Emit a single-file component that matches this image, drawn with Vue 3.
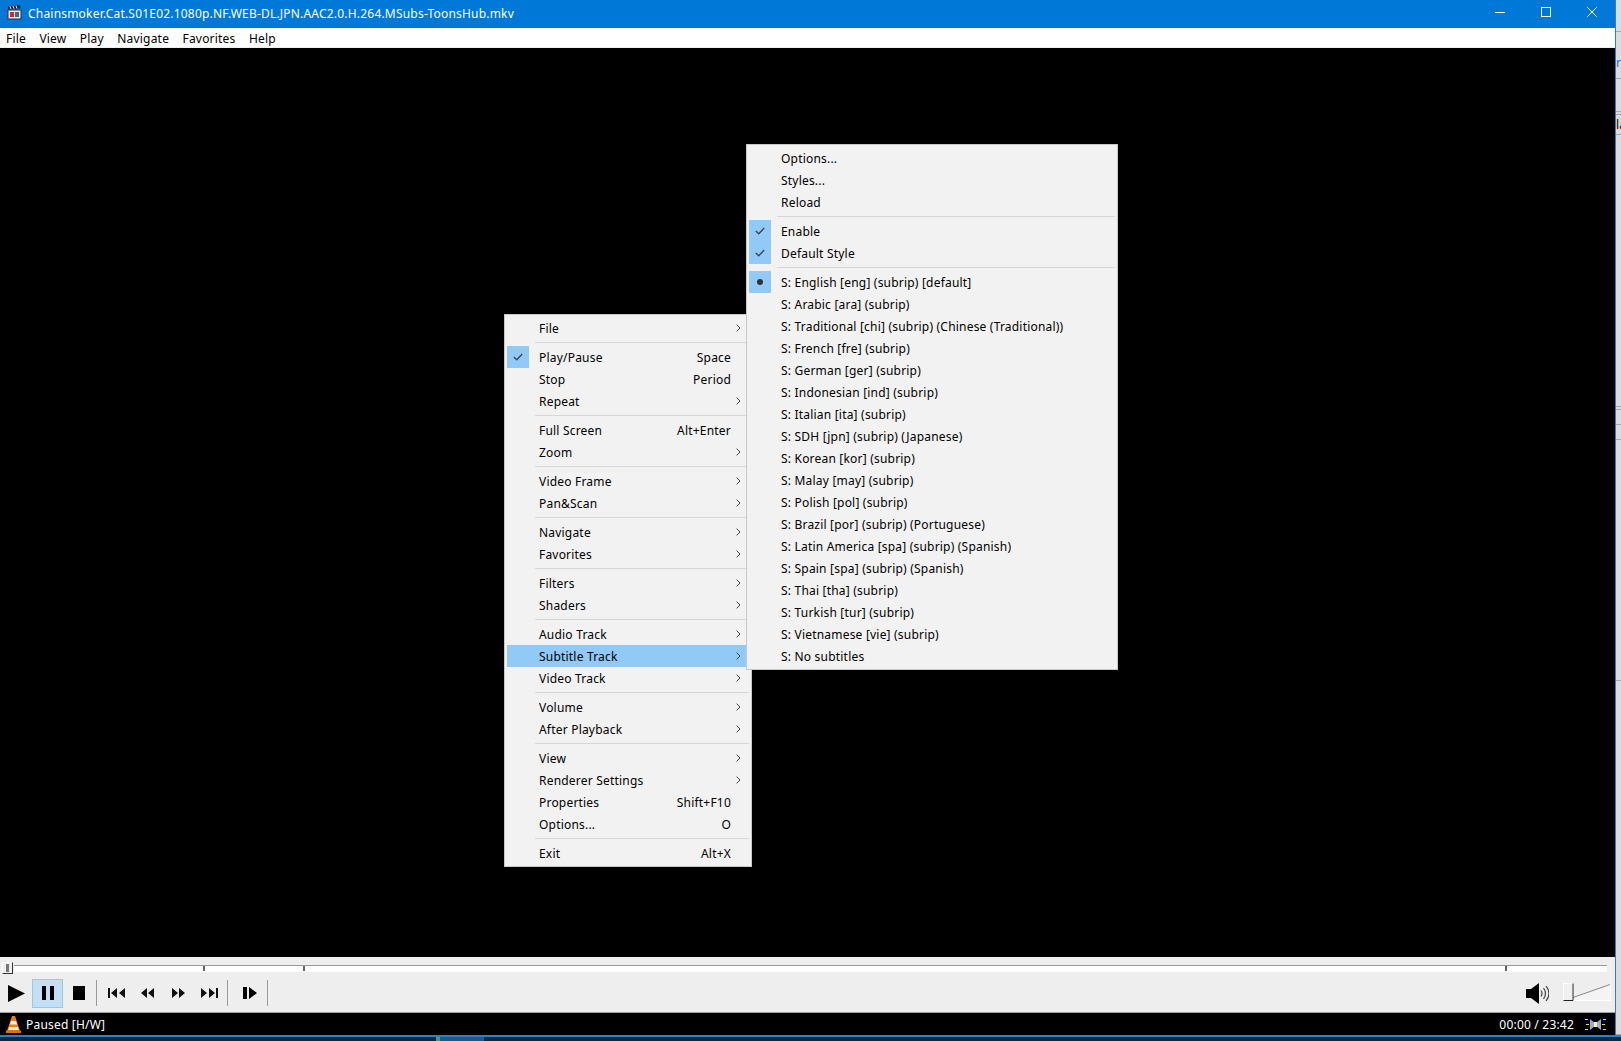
<template>
  <div class="desktop">
    <div class="top">
      <div class="player">
        <header class="titlebar">
          <svg class="app-icon" width="15" height="15" viewBox="0 0 15 15">
            <rect x="1" y="5" width="13" height="9" fill="#e8e8e8" stroke="#333" />
            <path d="M1 1.5l12-1.2.4 3-12 1.2z" fill="#222" />
            <path d="M3 1.4l1 2.6M6 1.1l1 2.6M9 .8l1 2.6" stroke="#eee" />
            <rect x="3" y="7" width="4" height="5" fill="#b33" />
            <rect x="8" y="7" width="4" height="5" fill="#468" />
          </svg>
          <span class="title-text">{{ title }}</span>
          <div class="win-buttons">
            <button class="win-btn"><svg width="10" height="10" viewBox="0 0 10 10"><path d="M0 5.5h10" stroke="#fff" /></svg></button>
            <button class="win-btn"><svg width="10" height="10" viewBox="0 0 10 10"><rect x=".5" y=".5" width="9" height="9" fill="none" stroke="#fff" /></svg></button>
            <button class="win-btn"><svg width="10" height="10" viewBox="0 0 10 10"><path d="M.3.3l9.4 9.4M9.7.3L.3 9.7" stroke="#fff" /></svg></button>
          </div>
        </header>

        <nav class="menubar">
          <span v-for="m in menuBar" :key="m">{{ m }}</span>
        </nav>

        <main class="video">
          <div class="menu main-menu">
            <template v-for="(item, i) in mainMenu" :key="i">
              <div v-if="item.sep" class="sep"></div>
              <div v-else class="row" :class="{ active: item.active }">
                <span class="gutter" :class="{ on: item.mark }">
                  <svg v-if="item.mark === 'check'" width="10" height="8" viewBox="0 0 10 8"><path d="M.8 4l3 2.8L9.2 1" fill="none" stroke="#3c4450" stroke-width="1.3" /></svg>
                </span>
                <span class="label">{{ item.label }}</span>
                <span v-if="item.key" class="shortcut">{{ item.key }}</span>
                <span class="arrow">
                  <svg v-if="item.sub" width="5" height="8" viewBox="0 0 5 8"><path d="M.6.6L4 4 .6 7.4" fill="none" stroke="#444" /></svg>
                </span>
              </div>
            </template>
          </div>

          <div class="menu sub-menu">
            <template v-for="(item, i) in subtitleMenu" :key="i">
              <div v-if="item.sep" class="sep"></div>
              <div v-else class="row">
                <span class="gutter" :class="{ on: item.mark }">
                  <svg v-if="item.mark === 'check'" width="10" height="8" viewBox="0 0 10 8"><path d="M.8 4l3 2.8L9.2 1" fill="none" stroke="#3c4450" stroke-width="1.3" /></svg>
                  <i v-if="item.mark === 'dot'" class="dot"></i>
                </span>
                <span class="label">{{ item.label }}</span>
              </div>
            </template>
          </div>
        </main>

        <div class="seekbar">
          <div class="seek-track">
            <i v-for="t in ticks" :key="t" class="tick" :style="{ left: t + 'px' }"></i>
          </div>
          <div class="seek-thumb"><i></i></div>
        </div>

        <div class="controls">
          <button class="ctl">
            <svg width="17" height="17" viewBox="0 0 17 17"><path d="M0 0l17 8.5L0 17z" fill="#000" /></svg>
          </button>
          <button class="ctl pressed">
            <svg width="12" height="14" viewBox="0 0 12 14"><path d="M0 0h4v14H0zM8 0h4v14H8z" fill="#000" /></svg>
          </button>
          <button class="ctl">
            <svg width="12" height="14" viewBox="0 0 12 14"><path d="M0 0h12v14H0z" fill="#000" /></svg>
          </button>
          <i class="ctl-sep first"></i>
          <button class="ctl">
            <svg width="17" height="10" viewBox="0 0 17 10"><path d="M0 0h2v10H0zM3 5l6-5v10zM11 5l6-5v10z" fill="#111" /></svg>
          </button>
          <button class="ctl">
            <svg width="15" height="10" viewBox="0 0 15 10"><path d="M1 5l6-5v10zM8 5l6-5v10z" fill="#111" /></svg>
          </button>
          <button class="ctl">
            <svg width="15" height="10" viewBox="0 0 15 10"><path d="M1 0l6 5-6 5zM8 0l6 5-6 5z" fill="#111" /></svg>
          </button>
          <button class="ctl">
            <svg width="17" height="10" viewBox="0 0 17 10"><path d="M0 0l6 5-6 5zM8 0l6 5-6 5zM15 0h2v10h-2z" fill="#111" /></svg>
          </button>
          <i class="ctl-sep"></i>
          <button class="ctl step">
            <svg width="14" height="12" viewBox="0 0 14 12"><path d="M0 0h4v12H0zM6 0l8 6-8 6z" fill="#000" /></svg>
          </button>
          <i class="ctl-sep"></i>

          <svg class="speaker" width="23" height="21" viewBox="0 0 23 21">
            <path d="M0 6h5l8-6v21l-8-6H0z" fill="#000" />
            <path d="M15 7.500q2 3 0 6M17.500 5q4 5.500 0 11M20 3q6 7.500 0 15" fill="none" stroke="#444" stroke-width="1.200" />
          </svg>
          <div class="volume">
            <svg width="48" height="18" viewBox="0 0 48 18">
              <path d="M10 14.500L47 1.500v16H10z" fill="#f4f4f4" />
              <path d="M10 14.500L47 1.500" stroke="#888" fill="none" />
              <path d="M47.500 1.500v16H10" stroke="#fff" fill="none" />
              <rect x=".5" y=".5" width="9" height="17" fill="#f0f0f0" stroke="#fff" />
              <path d="M.5 17.500h9.500V.5" stroke="#222" fill="none" />
            </svg>
          </div>
        </div>

        <footer class="statusbar">
          <svg width="15" height="17" viewBox="0 0 15 17">
            <path d="M6 0h3l5 15H1z" fill="#f08000" />
            <path d="M5 5h5l1 3.500H4z" fill="#eee" />
            <path d="M3.200 11h8.600l1 3H2.200z" fill="#eee" />
            <path d="M0 14.500h15V17H0z" fill="#e07000" />
          </svg>
          <span class="status-text">Paused [H/W]</span>
          <span class="time">00:00 / 23:42</span>
          <svg class="flag" width="21" height="13" viewBox="0 0 21 13">
            <path d="M5 1l5 4v3l-5 4zM16 1l-5 4v3l5 4z" fill="#aaa" />
            <path d="M9 4h3v5H9z" fill="#eee" />
            <path d="M0 1.500h3M1 6.500h3M0 11.500h3M18 1.500h3M17 6.500h3M18 11.500h3" stroke="#f0e020" />
          </svg>
        </footer>
      </div>

      <aside class="edge">
        <span v-for="(b, i) in edgeBlocks" :key="i" :class="b.cls" :style="{ height: b.h + 'px' }">{{ b.text }}</span>
      </aside>
    </div>

    <div class="taskbar">
      <span class="task-spacer"></span>
      <span class="task-green"></span>
      <span class="task-active"></span>
    </div>
  </div>
</template>

<script setup>
const title = 'Chainsmoker.Cat.S01E02.1080p.NF.WEB-DL.JPN.AAC2.0.H.264.MSubs-ToonsHub.mkv'
const menuBar = ['File', 'View', 'Play', 'Navigate', 'Favorites', 'Help']
const ticks = [203, 303, 1505]
const edgeBlocks = [
  { h: 32 },
  { h: 47, text: 'r', cls: 'blue' },
  { h: 33 },
  { h: 3 },
  { h: 20, text: 'la' },
  { h: 272 },
  { h: 3 },
  { h: 15 },
  { h: 15 },
  { h: 241 },
  { h: 354 }
]

const mainMenu = [
  { label: 'File', sub: true },
  { sep: true },
  { label: 'Play/Pause', key: 'Space', mark: 'check' },
  { label: 'Stop', key: 'Period' },
  { label: 'Repeat', sub: true },
  { sep: true },
  { label: 'Full Screen', key: 'Alt+Enter' },
  { label: 'Zoom', sub: true },
  { sep: true },
  { label: 'Video Frame', sub: true },
  { label: 'Pan&Scan', sub: true },
  { sep: true },
  { label: 'Navigate', sub: true },
  { label: 'Favorites', sub: true },
  { sep: true },
  { label: 'Filters', sub: true },
  { label: 'Shaders', sub: true },
  { sep: true },
  { label: 'Audio Track', sub: true },
  { label: 'Subtitle Track', sub: true, active: true },
  { label: 'Video Track', sub: true },
  { sep: true },
  { label: 'Volume', sub: true },
  { label: 'After Playback', sub: true },
  { sep: true },
  { label: 'View', sub: true },
  { label: 'Renderer Settings', sub: true },
  { label: 'Properties', key: 'Shift+F10' },
  { label: 'Options...', key: 'O' },
  { sep: true },
  { label: 'Exit', key: 'Alt+X' }
]

const subtitleMenu = [
  { label: 'Options...' },
  { label: 'Styles...' },
  { label: 'Reload' },
  { sep: true },
  { label: 'Enable', mark: 'check' },
  { label: 'Default Style', mark: 'check' },
  { sep: true },
  { label: 'S: English [eng] (subrip) [default]', mark: 'dot' },
  { label: 'S: Arabic [ara] (subrip)' },
  { label: 'S: Traditional [chi] (subrip) (Chinese (Traditional))' },
  { label: 'S: French [fre] (subrip)' },
  { label: 'S: German [ger] (subrip)' },
  { label: 'S: Indonesian [ind] (subrip)' },
  { label: 'S: Italian [ita] (subrip)' },
  { label: 'S: SDH [jpn] (subrip) (Japanese)' },
  { label: 'S: Korean [kor] (subrip)' },
  { label: 'S: Malay [may] (subrip)' },
  { label: 'S: Polish [pol] (subrip)' },
  { label: 'S: Brazil [por] (subrip) (Portuguese)' },
  { label: 'S: Latin America [spa] (subrip) (Spanish)' },
  { label: 'S: Spain [spa] (subrip) (Spanish)' },
  { label: 'S: Thai [tha] (subrip)' },
  { label: 'S: Turkish [tur] (subrip)' },
  { label: 'S: Vietnamese [vie] (subrip)' },
  { label: 'S: No subtitles' }
]
</script>

<style>
html, body {
  margin: 0;
  overflow: hidden;
  background: #000;
}
</style>

<style scoped>
.desktop {
  width: 1621px;
  height: 1041px;
  display: flex;
  flex-direction: column;
  overflow: hidden;
  font-family: "Noto Sans", "Open Sans", sans-serif;
  font-size: 12px;
  letter-spacing: 0.2px;
  color: #000;
}
button {
  border: none;
  padding: 0;
  background: none;
}
.top {
  display: flex;
  height: 1035px;
  flex: none;
}

.player {
  width: 1615px;
  display: flex;
  flex-direction: column;
  border-right: 1px solid #2f7fc8;
  flex: none;
}

.titlebar {
  height: 28px;
  flex: none;
  display: flex;
  align-items: center;
  background: #0078d7;
  color: #fff;
  padding-left: 7px;
}
.app-icon {
  margin-bottom: 3px;
}
.title-text {
  margin-left: 6px;
  margin-bottom: 1px;
}
.win-buttons {
  margin-left: auto;
  display: flex;
}
.win-btn {
  width: 46px;
  height: 24px;
  display: flex;
  align-items: center;
  justify-content: center;
  margin-bottom: 4px;
}

.menubar {
  flex: none;
  display: flex;
  gap: 13.4px;
  align-items: center;
  padding: 1px 0 0 6px;
  height: 18px;
  background: #fff;
  border-bottom: 1px solid #f0f0f0;
}

.video {
  flex: 1;
  background: #000;
  position: relative;
}

.menu {
  position: absolute;
  box-sizing: border-box;
  background: #f2f2f2;
  border: 1px solid #c8c8c8;
  padding: 2px;
}
.main-menu {
  left: 504px;
  top: 266px;
  width: 248px;
}
.sub-menu {
  left: 746px;
  top: 96px;
  width: 372px;
}
.row {
  height: 22px;
  display: flex;
  align-items: center;
}
.row.active {
  background: #91c9f7;
}
.gutter {
  width: 22px;
  height: 22px;
  margin-right: 10px;
  flex: none;
  display: flex;
  align-items: center;
  justify-content: center;
}
.gutter.on {
  background: #91c9f7;
}
.dot {
  width: 6px;
  height: 6px;
  border-radius: 50%;
  background: #333;
}
.label {
  flex: 1;
  white-space: nowrap;
  padding-top: 1px;
}
.shortcut {
  white-space: nowrap;
  padding-top: 1px;
}
.arrow {
  width: 18px;
  flex: none;
  display: flex;
  justify-content: center;
  padding-right: 3px;
  box-sizing: border-box;
}
.sep {
  height: 1px;
  margin: 3px 0 3px 28px;
  background: #d7d7d7;
}

.seekbar {
  height: 15px;
  flex: none;
  background: #eeeeee;
  position: relative;
}
.seek-track {
  position: absolute;
  left: 14px;
  right: 8px;
  top: 8px;
  height: 7px;
  box-sizing: border-box;
  background: #fff;
  border-top: 1px solid #999;
}
.tick {
  position: absolute;
  top: 0;
  width: 2px;
  height: 5px;
  margin-left: -14px;
  background: #666;
}
.seek-thumb {
  position: absolute;
  left: 2px;
  top: 5px;
  width: 11px;
  height: 12px;
  box-sizing: border-box;
  background: #eee;
  border: 1px solid #fff;
  border-right-color: #333;
  border-bottom-color: #333;
  display: flex;
  align-items: center;
  justify-content: center;
  z-index: 1;
}
.seek-thumb i {
  width: 3px;
  height: 8px;
  background: #777;
}

.controls {
  height: 38px;
  flex: none;
  background: #eeeeee;
  display: flex;
  align-items: center;
  padding: 2px 0 0 1px;
  border-bottom: 1px solid #a0a0a0;
}
.ctl {
  width: 31px;
  height: 29px;
  box-sizing: border-box;
  flex: none;
  display: flex;
  align-items: center;
  justify-content: center;
}
.ctl.pressed {
  background: #c3dff4;
  border: 1px solid #91c9f7;
}
.ctl.step {
  margin-left: 4px;
}
.ctl-sep {
  width: 1px;
  height: 26px;
  background: #999;
  flex: none;
  margin: 0 2px;
}
.ctl-sep.first {
  margin-right: 4px;
}
.speaker {
  margin-left: auto;
}
.volume {
  display: flex;
  margin: 0 4px 3px 14px;
}

.statusbar {
  height: 22px;
  flex: none;
  background: #000;
  color: #fff;
  display: flex;
  align-items: center;
  padding: 0 9px 0 6px;
}
.status-text {
  margin-left: 5px;
}
.time {
  margin-left: auto;
}
.flag {
  margin-left: 11px;
}

.edge {
  flex: 1;
  background: #dcdcdc;
  display: flex;
  flex-direction: column;
  overflow: hidden;
}
.edge span {
  display: block;
  box-sizing: border-box;
  border-bottom: 1px solid #a8a8a8;
  line-height: 20px;
  flex: none;
}
.edge .blue {
  padding-top: 21px;
  color: #1c6fb8;
}

.taskbar {
  flex: 1;
  display: flex;
  background: #102a3d;
  border-top: 2px solid #2f7fc8;
}
.task-spacer {
  width: 436px;
}
.task-green {
  width: 4px;
  background: #5f8f73;
}
.task-active {
  width: 44px;
  background: #1d5a8a;
}
</style>
